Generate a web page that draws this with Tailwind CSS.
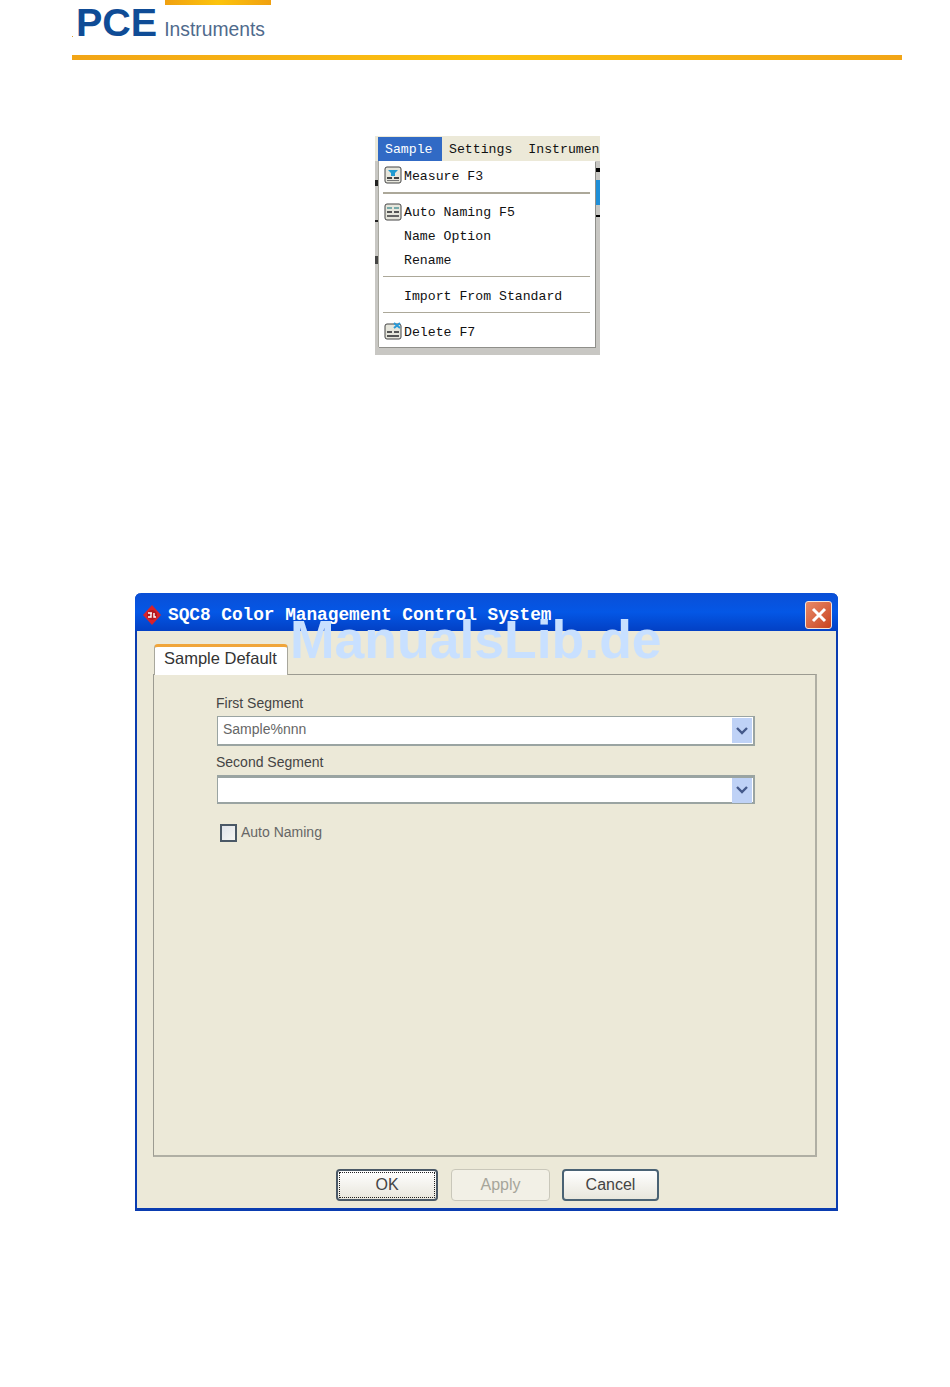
<!DOCTYPE html>
<html lang="en">
  <head>
    <meta charset="UTF-8" />
    <title>SQC8 Sample Default</title>
    <script src="https://cdn.jsdelivr.net/npm/@tailwindcss/browser@4"></script>
  </head>
  <body class="relative w-[950px] h-[1387px] overflow-hidden bg-white font-['Liberation_Sans',sans-serif]">
    <!-- Logo header -->
    <header class="w-[830px] ml-[72px] h-[60px] flex flex-col">
      <div class="h-[55px] relative flex items-start">
        <div class="absolute left-[93px] top-0 w-[106px] h-[5px] bg-gradient-to-r from-[#f0a010] via-[#fcc40c] to-[#f0a010]"></div>
        <div class="absolute left-0 top-[36px] w-px h-px bg-[#e0a030]"></div>
        <span class="ml-[4px] text-[39.5px] leading-[44px] font-bold text-[#0f4c96]">PCE</span>
        <span class="ml-[7px] mt-[18px] text-[19.3px] leading-[24px] text-[#4f6a8c]">Instruments</span>
      </div>
      <div class="h-[5px] bg-gradient-to-r from-[#f2a516] via-[#fcc20f] to-[#f2a516]"></div>
    </header>

    <!-- Menu screenshot -->
    <section class="relative mt-[76px] ml-[375px] w-[225px] h-[219px] bg-[#c8c7c3] font-['Liberation_Mono',monospace] text-[13.2px] text-[#111]">
      <div class="h-[25px] bg-[#ece9d8] flex items-end pl-[3px]">
        <div class="w-[64px] h-[24px] bg-[#316ac5] text-white flex items-center pl-[7px] pt-[2px]">Sample</div>
        <div class="h-[24px] flex items-center pl-[7px] pt-[2px] whitespace-nowrap overflow-hidden w-[158px]"><span>Settings</span><span class="ml-[16px]">Instrumen</span></div>
      </div>
      <!-- bits of the window behind the menu -->
      <div class="absolute left-[220px] top-[32px] w-[5px] h-[4px] bg-black"></div>
      <div class="absolute left-[220px] top-[44px] w-[5px] h-[25px] bg-[#1f8fd8]"></div>
      <div class="absolute left-[220px] top-[79px] w-[5px] h-[2px] bg-black"></div>
      <div class="absolute left-0 top-[44px] w-[3px] h-[6px] bg-[#222]"></div>
      <div class="absolute left-0 top-[84px] w-[3px] h-[2px] bg-[#222]"></div>
      <div class="absolute left-0 top-[120px] w-[3px] h-[8px] bg-[#444]"></div>

      <div class="absolute left-[3px] top-[25px] w-[217px] h-[186px] bg-white border-l border-[#a8a8a0] shadow-[1px_1px_0_0_#8f8f8a] pt-[3px]">
        <div class="h-[24px] flex items-center pl-[5px]">
          <svg width="18" height="18" viewBox="0 0 18 18" class="-mt-[2px]"><rect x="1" y="1" width="16" height="16" rx="2" fill="#e6e6dc" stroke="#444"/><rect x="3" y="11" width="5" height="2" fill="#444"/><rect x="10" y="11" width="5" height="2" fill="#444"/><rect x="3" y="14" width="12" height="1" fill="#777"/><path d="M4 4h10l-3 3v3H7V7z" fill="#1f9ad0"/></svg>
          <span class="ml-[2px] pt-[1px]">Measure F3</span>
        </div>
        <div class="h-[12px] pt-[4px] pl-[4px]"><div class="w-[207px] h-[2px] bg-[#aca899]"></div></div>
        <div class="h-[24px] flex items-center pl-[5px]">
          <svg width="18" height="18" viewBox="0 0 18 18" class="-mt-[1px]"><rect x="1" y="1" width="16" height="16" rx="2" fill="#e6e6dc" stroke="#444"/><rect x="3" y="4" width="5" height="2" fill="#7aa"/><rect x="10" y="4" width="5" height="2" fill="#7aa"/><rect x="3" y="8" width="5" height="2" fill="#555"/><rect x="10" y="8" width="5" height="2" fill="#555"/><rect x="3" y="12" width="12" height="2" fill="#666"/></svg>
          <span class="ml-[2px] pt-[1px]">Auto Naming F5</span>
        </div>
        <div class="h-[24px] flex items-center pl-[25px] pt-[1px]">Name Option</div>
        <div class="h-[24px] flex items-center pl-[25px] pt-[1px]">Rename</div>
        <div class="h-[12px] pt-[4px] pl-[4px]"><div class="w-[207px] h-px bg-[#aca899]"></div></div>
        <div class="h-[24px] flex items-center pl-[25px] pt-[1px]">Import From Standard</div>
        <div class="h-[12px] pt-[4px] pl-[4px]"><div class="w-[207px] h-px bg-[#aca899]"></div></div>
        <div class="h-[24px] flex items-center pl-[5px]">
          <svg width="18" height="18" viewBox="0 0 18 18" class="-mt-[2px]"><rect x="1" y="2" width="16" height="15" rx="2" fill="#e6e6dc" stroke="#444"/><rect x="3" y="9" width="5" height="2" fill="#555"/><rect x="10" y="9" width="5" height="2" fill="#555"/><rect x="3" y="13" width="12" height="2" fill="#555"/><path d="M10 1l6 5M16 1l-6 5" stroke="#2a9ad8" stroke-width="2"/></svg>
          <span class="ml-[2px] pt-[1px]">Delete F7</span>
        </div>
      </div>
    </section>

    <!-- Dialog screenshot -->
    <section class="mt-[238px] ml-[135px] w-[703px] h-[618px] flex flex-col bg-[#ece9d8] border-x-2 border-b-[3px] border-[#0a3cb0] rounded-t-[6px]">
      <div class="h-[38px] -mx-[2px] shrink-0 rounded-t-[6px] flex items-center pl-[7px] pr-[6px] pt-[5px] bg-gradient-to-b from-[#0a4fd6] via-[#0457e6] to-[#0340c4]">
        <svg width="20" height="22" viewBox="0 0 20 22" class="shrink-0"><path d="M10 1l9 10-9 10L1 11z" fill="#d8222a"/><circle cx="10" cy="11" r="5" fill="#b01820"/><path d="M6 9h4M9 9v4H6M12 9v4h2" stroke="#fff" stroke-width="1.4" fill="none"/></svg>
        <span class="ml-[6px] font-['Liberation_Mono',monospace] font-bold text-[17.75px] leading-[22px] text-white whitespace-nowrap">SQC8 Color Management Control System</span>
        <div class="ml-auto w-[27px] h-[28px] rounded-[3px] border border-[#f4e4dc] bg-gradient-to-br from-[#e88a68] to-[#c8401c] flex items-center justify-center">
          <svg width="18" height="18" viewBox="0 0 18 18"><path d="M3 3l12 12M15 3L3 15" stroke="#fff" stroke-width="3"/></svg>
        </div>
      </div>

      <div class="flex-1 flex flex-col pt-[13px]">
        <div class="ml-[17px] w-[134px] h-[31px] relative z-10 bg-white border-x border-[#a8a79c] border-t-[3px] border-t-[#f0a53a] rounded-t-[4px] flex items-center pl-[9px] pb-[5px] text-[16.5px] text-[#333] whitespace-nowrap">Sample Default</div>
        <div class="ml-[16px] w-[664px] h-[483px] -mt-px bg-[#ece9d8] border border-[#9c9b91] border-r-2 border-b-2 border-r-[#b0afa4] border-b-[#b0afa4] pl-[63px] pt-[19px]">
          <div class="text-[14px] leading-[18px] text-[#444] -ml-px">First Segment</div>
          <div class="mt-[4px] w-[538px] h-[30px] bg-white border-2 border-t border-l border-[#9aa4a2] flex items-center pl-[5px] pr-[1px] pb-[2px] text-[14px] text-[#666]">
            <span>Sample%nnn</span>
            <div class="ml-auto w-[20px] h-[25px] mt-[2px] bg-[#bfd2f6] flex items-center justify-center">
              <svg width="14" height="10" viewBox="0 0 14 10"><path d="M2 2l5 5 5-5" stroke="#44598a" stroke-width="2.4" fill="none"/></svg>
            </div>
          </div>
          <div class="mt-[7px] -ml-px text-[14px] leading-[18px] text-[#444]">Second Segment</div>
          <div class="mt-[4px] w-[538px] h-[29px] bg-white border-2 border-t-[3px] border-l border-[#9aa4a2] flex items-center pr-[1px]">
            <div class="ml-auto w-[20px] h-[25px] bg-[#bfd2f6] flex items-center justify-center">
              <svg width="14" height="10" viewBox="0 0 14 10"><path d="M2 2l5 5 5-5" stroke="#44598a" stroke-width="2.4" fill="none"/></svg>
            </div>
          </div>
          <div class="mt-[18px] ml-[3px] flex items-center">
            <div class="w-[17px] h-[18px] border-2 border-[#4a5866] bg-gradient-to-br from-[#dfe3ea] to-[#f6f6f2]"></div>
            <span class="ml-[4px] text-[14px] text-[#666]">Auto Naming</span>
          </div>
        </div>

        <div class="mt-[12px] flex items-start text-[16px]">
          <div class="ml-[199px] w-[102px] h-[32px] rounded-[4px] border-2 border-[#4a5866] bg-gradient-to-b from-white to-[#e8e6dc] p-px">
            <div class="w-full h-full border border-dotted border-[#222] flex items-center justify-center text-[#444]">OK</div>
          </div>
          <div class="ml-[13px] w-[99px] h-[32px] rounded-[4px] border border-[#c9c7ba] bg-[#f2f0e6] flex items-center justify-center text-[#a6a59a]">Apply</div>
          <div class="ml-[12px] w-[97px] h-[32px] rounded-[4px] border-2 border-[#4a6274] bg-gradient-to-b from-white to-[#e8e6dc] flex items-center justify-center text-[#444]">Cancel</div>
        </div>
      </div>
    </section>

    <!-- Watermark -->
    <div class="absolute left-[290px] top-[608px] text-[53.5px] leading-[64px] font-bold text-[#c8e0ff] whitespace-nowrap pointer-events-none">ManualsLib.de</div>
  </body>
</html>
